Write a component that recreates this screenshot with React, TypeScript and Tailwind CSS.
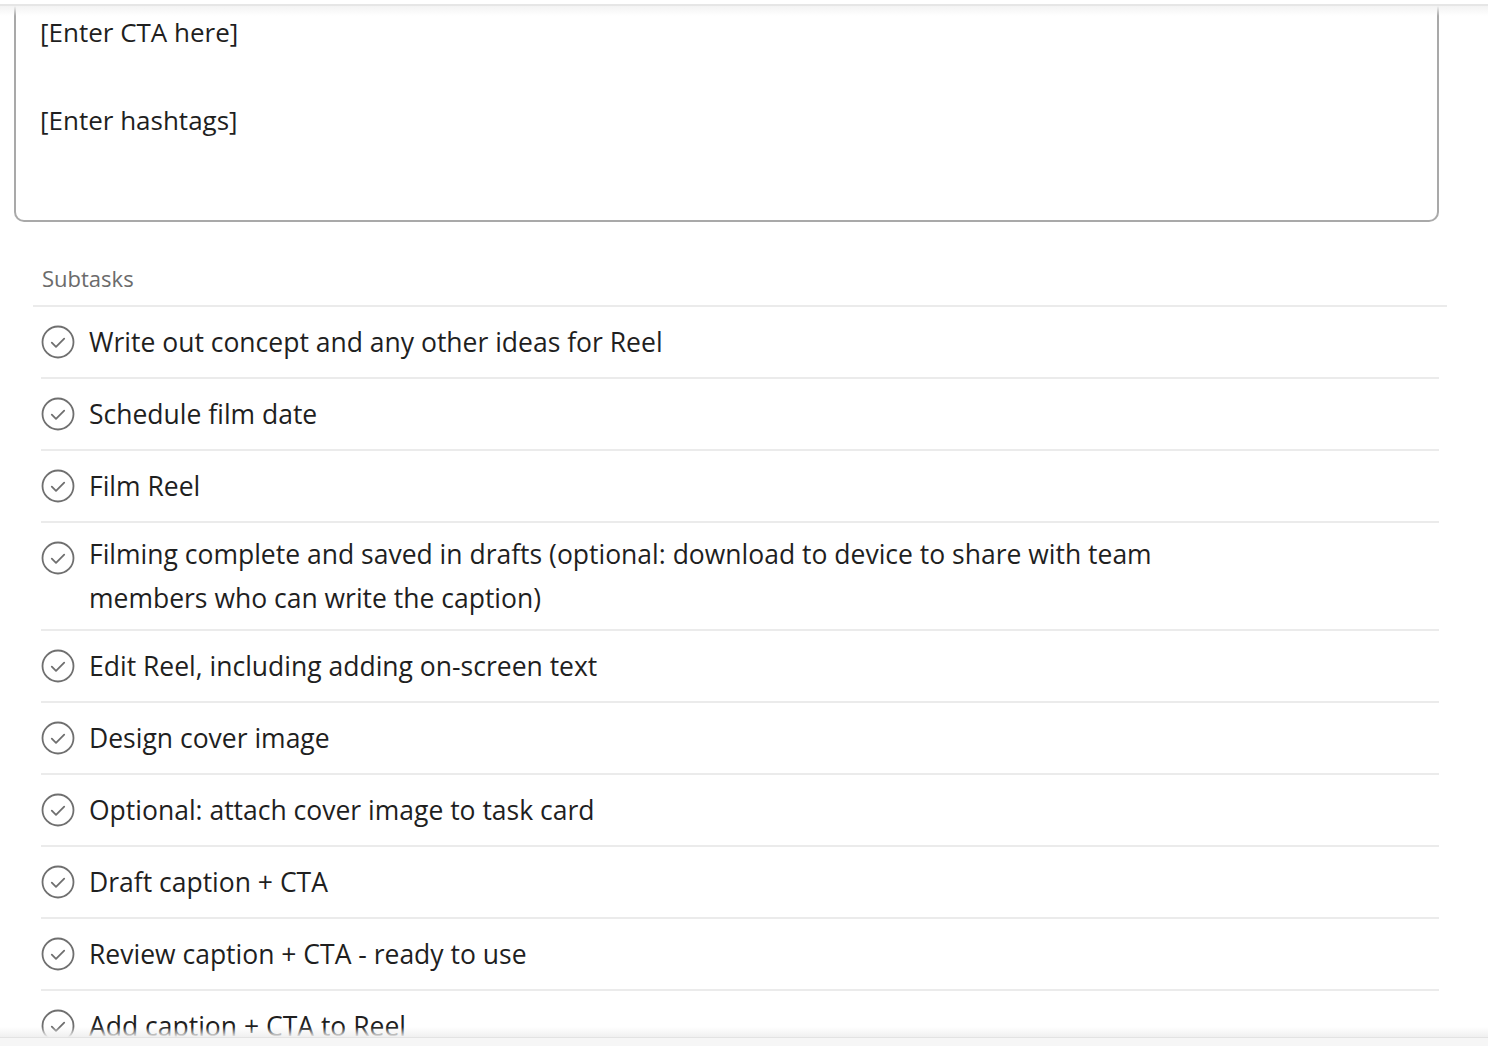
import { ReactNode } from "react";

const subtasks = [
  "Write out concept and any other ideas for Reel",
  "Schedule film date",
  "Film Reel",
  "Filming complete and saved in drafts (optional: download to device to share with team members who can write the caption)",
  "Edit Reel, including adding on-screen text",
  "Design cover image",
  "Optional: attach cover image to task card",
  "Draft caption + CTA",
  "Review caption + CTA - ready to use",
  "Add caption + CTA to Reel",
];

function CheckCircle() {
  return (
    <svg width="34" height="34" viewBox="0 0 34 34" fill="none" className="shrink-0">
      <circle cx="17" cy="17" r="15.5" stroke="#6f6f6f" strokeWidth="1.8" />
      <path d="M10.8 17.6l4.2 4.2 8.2-8.2" stroke="#6f6f6f" strokeWidth="1.8" strokeLinecap="round" strokeLinejoin="round" />
    </svg>
  );
}

function SubtaskRow({ children }: { children: ReactNode }) {
  return (
    <div className="flex items-center gap-[14px] min-h-[72px] py-[9px] border-b-2 border-[#ebebeb]">
      <div className="self-start h-[52px] flex items-center">
        <CheckCircle />
      </div>
      <span className="max-w-[1075px] text-[26.5px] leading-[44px] text-[#1f1f1f]">{children}</span>
    </div>
  );
}

export default function App() {
  return (
    <div
      className="relative h-[1046px] w-full overflow-hidden bg-white"
      style={{ fontFamily: '"Open Sans", "Noto Sans", sans-serif' }}
    >
      {/* top scroll edge */}
      <div className="pointer-events-none absolute inset-x-0 top-0 z-10">
        <div className="h-1 bg-white" />
        <div className="h-[2px] bg-[#e6e6e6]" />
        <div className="h-[10px] bg-gradient-to-b from-[#f3f3f3] to-white/0" />
      </div>

      <div className="pt-[5px] pl-[14px] pr-[49px]">
        <div className="h-[217px] border-2 border-t-0 border-[#a9a9a9] rounded-b-[10px] pl-[24px] pt-[5px] text-[26px] leading-[44px] text-[#1f1f1f]">
          <div>[Enter CTA here]</div>
          <div className="h-[44px]" />
          <div>[Enter hashtags]</div>
        </div>
      </div>

      <div className="pl-[33px] pr-[41px] mt-[36px]">
        <div className="border-b-2 border-[#ebebeb] pl-[9px] pb-[7px] text-[22px] leading-[40px] text-[#6b6b6b]">
          Subtasks
        </div>
      </div>

      <div className="pl-[41px] pr-[49px]">
        {subtasks.map((s) => (
          <SubtaskRow key={s}>{s}</SubtaskRow>
        ))}
      </div>

      {/* bottom sticky footer edge */}
      <div className="pointer-events-none absolute inset-x-0 bottom-0 z-10">
        <div className="h-[10px] bg-gradient-to-t from-[#f0f0f0] to-white/0" />
        <div className="h-px bg-[#e3e3e3]" />
        <div className="h-[8px] bg-[#f6f6f6]" />
      </div>
    </div>
  );
}
